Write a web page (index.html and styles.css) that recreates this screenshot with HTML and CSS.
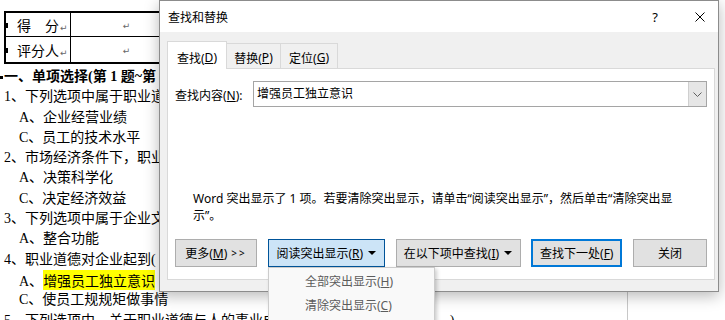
FILE: index.html
```html
<!DOCTYPE html>
<html lang="zh-CN">
<head>
    <meta charset="UTF-8">
    <meta name="viewport" content="width=device-width, initial-scale=1.0">
    <title>查找和替换</title>
    <link rel="stylesheet" href="styles.css">
</head>
<body>
    <div class="screen">
        <div class="doc">
            <div class="pm-top">↵</div>
            <table class="score">
                <tr>
                    <td class="label-cell row1"><span class="row-mark"></span>得　分<span class="pm">↵</span></td>
                    <td class="blank-cell row1"><span class="pm">↵</span></td>
                </tr>
                <tr>
                    <td class="label-cell row2"><span class="row-mark"></span>评分人<span class="pm">↵</span></td>
                    <td class="blank-cell row2"><span class="pm">↵</span></td>
                </tr>
            </table>
            <div class="line heading">一、单项选择(第 1 题~第 60 题。选择一个正确的答案，将相应的字母填入题内的括号中。)</div>
            <div class="line q">1、下列选项中属于职业道德范畴的是(　　)。</div>
            <div class="line opt">A、企业经营业绩</div>
            <div class="line opt">C、员工的技术水平</div>
            <div class="line q">2、市场经济条件下，职业道德最终将对企业起到(　　)的作用。</div>
            <div class="line opt">A、决策科学化</div>
            <div class="line opt">C、决定经济效益</div>
            <div class="line q">3、下列选项中属于企业文化功能的是(　　)。</div>
            <div class="line opt">A、整合功能</div>
            <div class="line q">4、职业道德对企业起到(　　)的作用。</div>
            <div class="line opt">A、<span class="hl">增强员工独立意识</span></div>
            <div class="line opt">C、使员工规规矩做事情</div>
            <div class="line q">5、下列选项中，关于职业道德与人的事业成功的关系的正确论述是(　　)。</div>
        </div>

        <div class="dialog">
            <div class="titlebar">
                <span class="title">查找和替换</span>
                <span class="tb-help">?</span>
                <span class="tb-close">
                    <svg width="10" height="10" viewBox="0 0 10 10">
                        <path d="M0.5 0.5 L9.5 9.5 M9.5 0.5 L0.5 9.5" stroke="#000" stroke-width="1" fill="none"/>
                    </svg>
                </span>
            </div>
            <div class="dialog-body">
                <div class="tabs">
                    <div class="tab active">查找(<u>D</u>)</div>
                    <div class="tab tab-replace">替换(<u>P</u>)</div>
                    <div class="tab tab-goto">定位(<u>G</u>)</div>
                </div>
                <div class="panel">
                    <div class="find-row">
                        <label class="find-label">查找内容(<u>N</u>):</label>
                        <div class="combo">
                            <span class="combo-text">增强员工独立意识</span>
                            <span class="combo-btn">
                                <svg width="9" height="5" viewBox="0 0 9 5">
                                    <path d="M0.5 0.5 L4.5 4.5 L8.5 0.5" stroke="#606060" stroke-width="1" fill="none"/>
                                </svg>
                            </span>
                        </div>
                    </div>
                    <p class="message">Word 突出显示了 1 项。若要清除突出显示，请单击“阅读突出显示”，然后单击“清除突出显示”。</p>
                    <div class="buttons">
                        <button class="btn btn-more">更多(<u>M</u>) <span class="chevrons">&gt;&gt;</span></button>
                        <button class="btn btn-open btn-read">阅读突出显示(<u>R</u>)<span class="caret"></span></button>
                        <button class="btn btn-within">在以下项中查找(<u>I</u>)<span class="caret"></span></button>
                        <button class="btn btn-default btn-next">查找下一处(<u>F</u>)</button>
                        <button class="btn btn-close">关闭</button>
                    </div>
                </div>
            </div>
        </div>

        <div class="menu">
            <div class="menu-item">全部突出显示(<u>H</u>)</div>
            <div class="menu-item">清除突出显示(<u>C</u>)</div>
        </div>
    </div>
</body>
</html>
```

FILE: styles.css
```css
body {
    margin: 0;
    background-color: #fff;
}

.screen {
    position: relative;
    width: 725px;
    height: 320px;
    overflow: hidden;
}

/* document behind the dialog */
.doc {
    width: 627px;
    height: 320px;
    border-right: 1px solid #c8c8c8;
    overflow: hidden;
    font-family: "Liberation Serif", "Noto Sans CJK SC", serif;
    font-size: 14px;
    color: #000;
}

.pm-top {
    height: 12px;
    margin-top: -9px;
    padding-left: 5px;
    font-family: "DejaVu Sans", sans-serif;
    font-size: 9px;
    line-height: 12px;
    color: #666;
}

.pm {
    font-family: "DejaVu Sans", sans-serif;
    font-size: 9px;
    color: #666;
    margin-left: 1px;
}

.score {
    border-collapse: separate;
    border-spacing: 0;
    border: 2px solid #000;
    margin: 8px 0 0 4px;
}

.score td {
    padding: 0;
    white-space: nowrap;
}

.score .row1 {
    height: 23px;
    border-bottom: 1px solid #000;
}

.score .row2 {
    height: 25px;
}

.label-cell {
    position: relative;
    width: 53px;
    padding-left: 11px !important;
    border-right: 1px solid #000;
}

.blank-cell {
    width: 110px;
    text-align: center;
}

.row-mark {
    position: absolute;
    left: -2px;
    top: 50%;
    width: 4px;
    height: 5px;
    margin-top: -2px;
    background-color: #000;
}

.line {
    height: 20.3px;
    line-height: 20.3px;
    white-space: nowrap;
    padding-left: 4px;
}

.heading {
    position: relative;
    margin-top: 3px;
    font-weight: bold;
}

.heading::before {
    content: "";
    position: absolute;
    left: 0;
    top: 9px;
    width: 3px;
    height: 3px;
    background-color: #000;
}

.opt {
    padding-left: 19px;
}

.hl {
    background-color: #ffff00;
    font-family: "Noto Sans CJK SC", sans-serif;
}

/* find and replace dialog */
.dialog {
    position: absolute;
    left: 159px;
    top: 0;
    width: 560px;
    height: 292px;
    box-sizing: border-box;
    border: 1px solid #8c8c8c;
    background-color: #f0f0f0;
    box-shadow: 0 4px 14px rgba(0, 0, 0, 0.28);
    display: flex;
    flex-direction: column;
    font-family: "Noto Sans", "Noto Sans CJK SC", sans-serif;
    font-size: 12px;
    color: #000;
}

.titlebar {
    height: 31px;
    background-color: #fff;
    display: flex;
    align-items: center;
    padding: 0 3px 0 8px;
}

.title {
    flex: 1;
}

.tb-help {
    width: 24px;
    margin-right: 18px;
    text-align: center;
    font-size: 13px;
}

.tb-close {
    width: 30px;
    display: flex;
    justify-content: center;
}

.dialog-body {
    flex: 1;
    display: flex;
    flex-direction: column;
    padding: 9px 3px 11px 7px;
}

.tabs {
    display: flex;
    align-items: flex-end;
    height: 27px;
}

.tab {
    height: 25px;
    box-sizing: border-box;
    padding-top: 3px;
    border-top: 1px solid #d9d9d9;
    border-right: 1px solid #d9d9d9;
    display: flex;
    align-items: center;
    justify-content: center;
}

.tab.active {
    width: 60px;
    height: 28px;
    margin-bottom: -1px;
    padding-top: 4px;
    border-left: 1px solid #d9d9d9;
    background-color: #fff;
    position: relative;
    z-index: 1;
}

.tab-replace {
    width: 54px;
}

.tab-goto {
    width: 57px;
}

.panel {
    flex: 1;
    background-color: #fff;
    border: 1px solid #d9d9d9;
    padding: 12px 7px 0 7px;
}

.find-row {
    display: flex;
    align-items: center;
    height: 26px;
}

.find-label {
    width: 78px;
    padding-top: 1px;
}

.combo {
    flex: 1;
    height: 26px;
    box-sizing: border-box;
    border: 1px solid #a5a5a5;
    display: flex;
}

.combo-text {
    flex: 1;
    padding-left: 3px;
    line-height: 24px;
}

.combo-btn {
    width: 17px;
    background-color: #e6e6e6;
    border-left: 1px solid #cfcfcf;
    display: flex;
    align-items: center;
    justify-content: center;
}

.message {
    width: 490px;
    margin: 83px 0 0 18px;
    line-height: 17px;
}

.buttons {
    display: flex;
    justify-content: space-between;
    margin-top: 15px;
}

.btn {
    height: 28px;
    box-sizing: border-box;
    padding: 0;
    border: 1px solid #adadad;
    background-color: #e1e1e1;
    font: inherit;
    color: #000;
    display: flex;
    align-items: center;
    justify-content: center;
}

.btn-more {
    width: 82px;
}

.chevrons {
    margin-left: 4px;
    font-size: 10px;
    letter-spacing: 2px;
}

.btn-read {
    width: 117px;
}

.btn-within {
    width: 125px;
}

.btn-next {
    width: 91px;
}

.btn-close {
    width: 74px;
}

.btn-open {
    background-color: #cce4f7;
    border-color: #005499;
}

.btn-default {
    border: 2px solid #0078d7;
}

.caret {
    display: inline-block;
    margin-left: 5px;
    border-left: 4px solid transparent;
    border-right: 4px solid transparent;
    border-top: 4px solid #000;
}

/* dropdown menu of the read highlight button */
.menu {
    position: absolute;
    left: 268px;
    top: 267px;
    width: 167px;
    height: 60px;
    box-sizing: border-box;
    padding-top: 2px;
    border: 1px solid #cccccc;
    background-color: #f9f9f9;
    box-shadow: 2px 2px 4px rgba(0, 0, 0, 0.2);
    font-family: "Noto Sans", "Noto Sans CJK SC", sans-serif;
    font-size: 12px;
    color: #5c5c5c;
}

.menu-item {
    height: 24px;
    line-height: 24px;
    padding-left: 36px;
}
```
